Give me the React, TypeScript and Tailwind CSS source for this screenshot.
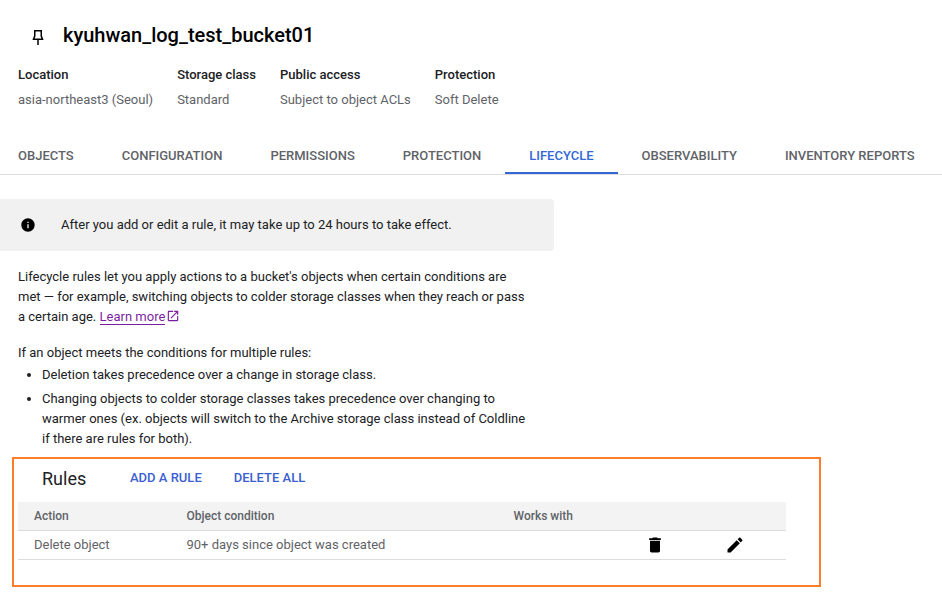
import React from 'react';

const Icon: React.FC<{ d: string; className?: string }> = ({ d, className }) => (
    <svg viewBox="0 0 24 24" fill="currentColor" className={className}>
        <path d={d} />
    </svg>
);

const tabs = ['OBJECTS', 'CONFIGURATION', 'PERMISSIONS', 'PROTECTION', 'LIFECYCLE', 'OBSERVABILITY', 'INVENTORY REPORTS'];

const meta = [
    { label: 'Location', value: 'asia-northeast3 (Seoul)' },
    { label: 'Storage class', value: 'Standard' },
    { label: 'Public access', value: 'Subject to object ACLs' },
    { label: 'Protection', value: 'Soft Delete' },
];

export default function App() {
    return (
        <div className="w-[942px] h-[606px] overflow-hidden bg-white font-['Roboto',sans-serif] text-[13px] text-[#202124]">
            <div className="flex items-center h-[24px] mt-[23px] pl-[29px]">
                <svg viewBox="0 0 18 18" fill="none" stroke="currentColor" strokeWidth="1.5" className="w-[18px] h-[18px] mt-[4px] text-black">
                    <path d="M5.75 2.75H12.25V8L13.5 11.25H4.5L5.75 8Z" />
                    <path d="M9 11.5V17" />
                </svg>
                <h1 className="ml-[16px] text-[20px] font-medium text-black leading-[24px]">kyuhwan_log_test_bucket01</h1>
            </div>

            <div className="flex gap-6 mt-[18px] pl-[18px]">
                {meta.map((m) => (
                    <div key={m.label}>
                        <div className="font-medium leading-[20px] h-[20px] text-[#202124]">{m.label}</div>
                        <div className="mt-[5px] leading-[20px] text-[#5f6368]">{m.value}</div>
                    </div>
                ))}
            </div>

            <div className="mt-[20px] h-[44px] border-b border-[#dadce0] box-content">
                <div className="flex -ml-[6px]">
                    {tabs.map((t) => (
                        <div
                            key={t}
                            className={
                                t === 'LIFECYCLE'
                                    ? 'flex items-center h-[44px] px-6 pt-[10px] font-medium text-[#3367d6] border-b-2 border-[#3367d6]'
                                    : 'flex items-center h-[44px] px-6 pt-[8px] font-medium text-[#5f6368] whitespace-nowrap'
                            }
                        >
                            {t}
                        </div>
                    ))}
                </div>
            </div>

            <div className="flex items-center w-[554px] h-[52px] mt-[24px] bg-[#f1f1f1] rounded-r-[4px] pl-[20px]">
                <Icon
                    className="w-[16px] h-[16px] text-black"
                    d="M12 2C6.48 2 2 6.48 2 12s4.48 10 10 10 10-4.48 10-10S17.52 2 12 2zm1 15h-2v-6h2v6zm0-8h-2V7h2v2z"
                />
                <span className="ml-[25px] text-[#202124]">After you add or edit a rule, it may take up to 24 hours to take effect.</span>
            </div>

            <p className="mt-[16px] ml-[18px] w-[512px] leading-[20px] text-[#202124]">
                Lifecycle rules let you apply actions to a bucket's objects when certain conditions are met — for example, switching objects to colder storage classes when they reach or pass a certain age.{' '}
                <a className="text-[#7b1fa2] border-b border-[#7b1fa2]">Learn more</a>
                <Icon
                    className="inline-block w-[14px] h-[14px] ml-[1px] align-[-2px] text-[#7b1fa2]"
                    d="M19 19H5V5h7V3H5c-1.11 0-2 .9-2 2v14c0 1.1.89 2 2 2h14c1.1 0 2-.9 2-2v-7h-2v7zM14 3v2h3.59l-9.83 9.83 1.41 1.41L19 6.41V10h2V3h-7z"
                />
            </p>

            <p className="mt-[16px] ml-[18px] leading-[20px] text-[#202124]">If an object meets the conditions for multiple rules:</p>
            <ul className="mt-[2px] ml-[42px] w-[490px] list-disc leading-[20px] text-[#202124]">
                <li>Deletion takes precedence over a change in storage class.</li>
                <li className="mt-[4px]">
                    Changing objects to colder storage classes takes precedence over changing to warmer ones (ex. objects will switch to the Archive storage class instead of Coldline if there are rules for both).
                </li>
            </ul>

            <div className="ml-[12px] mt-[8px] w-[809px] h-[130px] border-2 border-[#fd7e2a] pl-[4px] pt-[1px]">
                <div className="flex items-center h-[36px] pl-[24px]">
                    <span className="text-[18px] text-[#202124] w-[88px]">Rules</span>
                    <span className="font-medium text-[#3b5fd0]">ADD A RULE</span>
                    <span className="ml-[32px] font-medium text-[#3b5fd0]">DELETE ALL</span>
                </div>
                <div className="w-[768px] mt-[6px]">
                    <div className="flex items-center h-[28px] bg-[#f3f3f3] border-b border-[#dadce0] box-content text-[12px] font-medium text-[#5f6368]">
                        <span className="w-[152.5px] pl-[16px] box-content">Action</span>
                        <span className="w-[327px]">Object condition</span>
                        <span>Works with</span>
                    </div>
                    <div className="flex items-center h-[28px] border-b border-[#dadce0] box-content text-[#5f6368]">
                        <span className="w-[152.5px] pl-[16px] box-content">Delete object</span>
                        <span className="w-[458.5px]">90+ days since object was created</span>
                        <Icon
                            className="w-[20px] h-[20px] text-black"
                            d="M6 19c0 1.1.9 2 2 2h8c1.1 0 2-.9 2-2V7H6v12zM19 4h-3.5l-1-1h-5l-1 1H5v2h14V4z"
                        />
                        <Icon
                            className="w-[20px] h-[20px] ml-[60px] text-black"
                            d="M3 17.25V21h3.75L17.81 9.94l-3.75-3.75L3 17.25zM20.71 7.04c.39-.39.39-1.02 0-1.41l-2.34-2.34c-.39-.39-1.02-.39-1.41 0l-1.83 1.83 3.75 3.75 1.83-1.83z"
                        />
                    </div>
                </div>
            </div>
        </div>
    );
}
